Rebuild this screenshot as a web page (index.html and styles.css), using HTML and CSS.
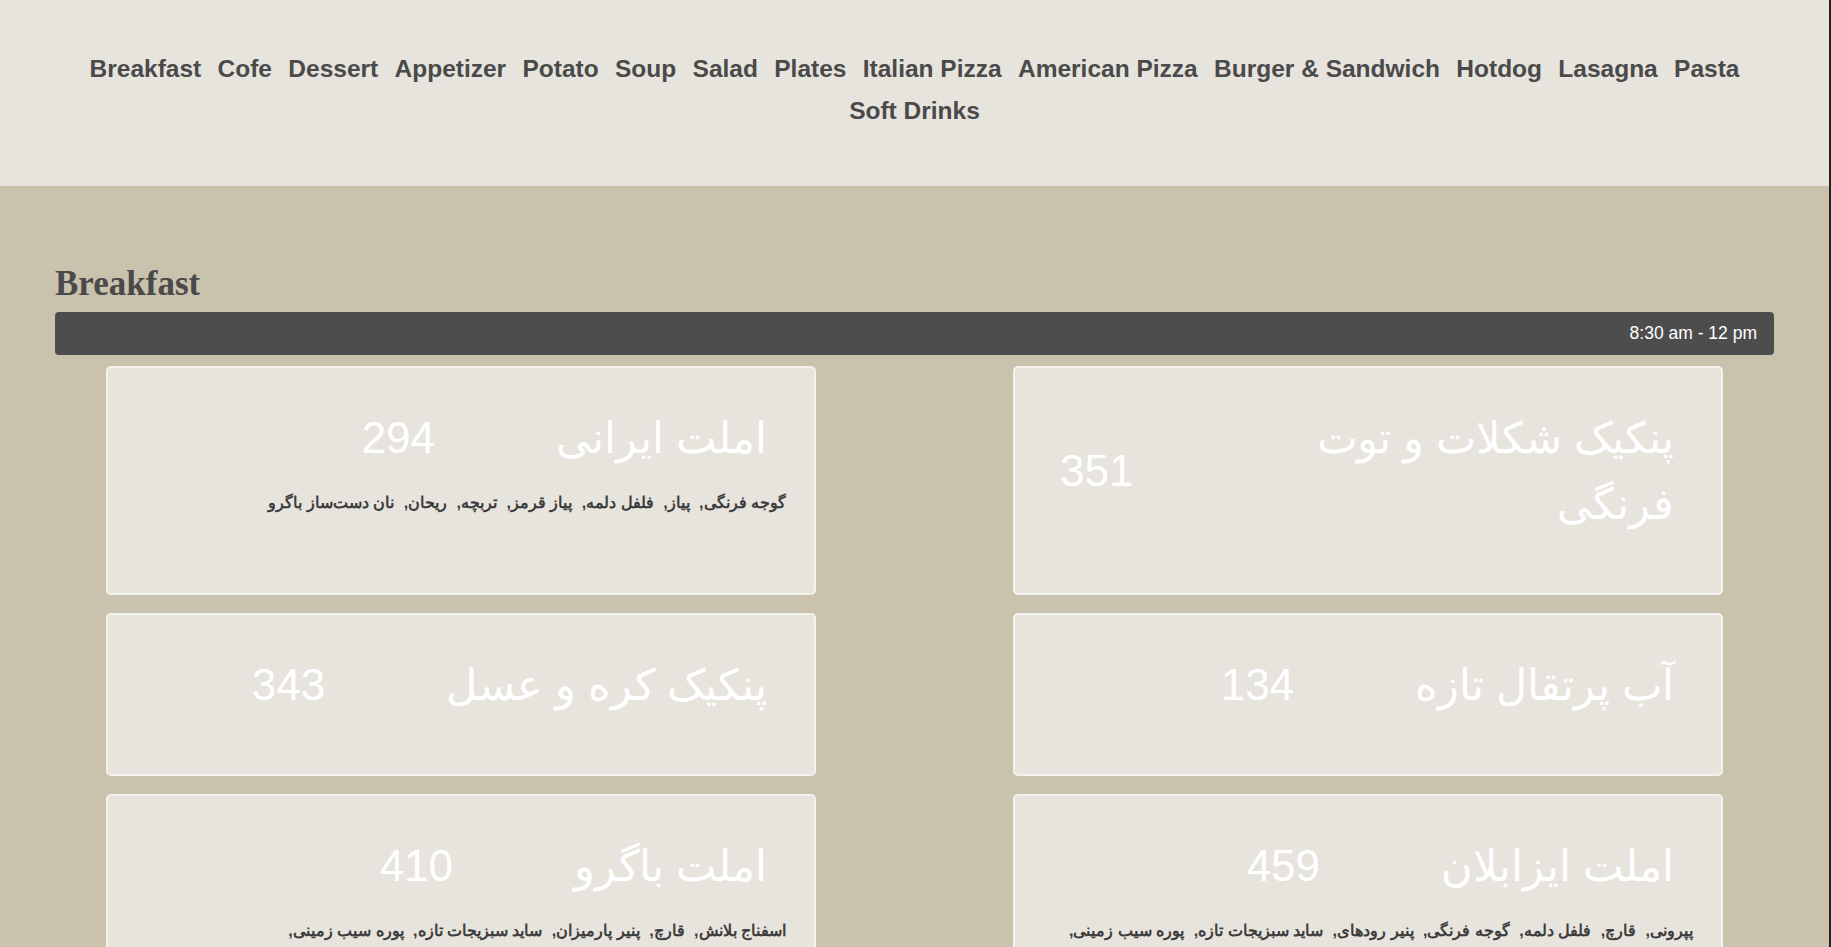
FILE: index.html
```html
<!DOCTYPE html>
<html lang="en">
<head>
<meta charset="utf-8">
<title>Menu</title>
<link rel="stylesheet" href="styles.css">
</head>
<body>
<header class="topbar">
  <nav class="menu">
    <a class="menu-link" href="#">Breakfast</a>
    <a class="menu-link" href="#">Cofe</a>
    <a class="menu-link" href="#">Dessert</a>
    <a class="menu-link" href="#">Appetizer</a>
    <a class="menu-link" href="#">Potato</a>
    <a class="menu-link" href="#">Soup</a>
    <a class="menu-link" href="#">Salad</a>
    <a class="menu-link" href="#">Plates</a>
    <a class="menu-link" href="#">Italian Pizza</a>
    <a class="menu-link" href="#">American Pizza</a>
    <a class="menu-link" href="#">Burger &amp; Sandwich</a>
    <a class="menu-link" href="#">Hotdog</a>
    <a class="menu-link" href="#">Lasagna</a>
    <a class="menu-link" href="#">Pasta</a>
    <a class="menu-link" href="#">Soft Drinks</a>
  </nav>
</header>
<main class="content">
  <section class="category">
    <h2 class="category-title">Breakfast</h2>
    <div class="hours-bar"><span class="hours">8:30 am - 12 pm</span></div>
    <div class="items">
      <article class="item" dir="rtl">
        <div class="item-head">
          <h3 class="item-name">املت ایرانی</h3>
          <span class="item-price">294</span>
        </div>
        <p class="item-ingredients"><span class="ingredient">گوجه فرنگی,</span> <span class="ingredient">پیاز,</span> <span class="ingredient">فلفل دلمه,</span> <span class="ingredient">پیاز قرمز,</span> <span class="ingredient">تربچه,</span> <span class="ingredient">ریحان,</span> <span class="ingredient">نان دست‌ساز باگرو</span></p>
      </article>
      <article class="item" dir="rtl">
        <div class="item-head">
          <h3 class="item-name">پنکیک شکلات و توت فرنگی</h3>
          <span class="item-price">351</span>
        </div>
      </article>
      <article class="item" dir="rtl">
        <div class="item-head">
          <h3 class="item-name">پنکیک کره و عسل</h3>
          <span class="item-price">343</span>
        </div>
      </article>
      <article class="item" dir="rtl">
        <div class="item-head">
          <h3 class="item-name">آب پرتقال تازه</h3>
          <span class="item-price">134</span>
        </div>
      </article>
      <article class="item" dir="rtl">
        <div class="item-head">
          <h3 class="item-name">املت باگرو</h3>
          <span class="item-price">410</span>
        </div>
        <p class="item-ingredients"><span class="ingredient">اسفناج بلانش,</span> <span class="ingredient">قارچ,</span> <span class="ingredient">پنیر پارمیزان,</span> <span class="ingredient">ساید سبزیجات تازه,</span> <span class="ingredient">پوره سیب زمینی,</span> <span class="ingredient">نان دست‌ساز باگرو با کره محلی</span></p>
      </article>
      <article class="item" dir="rtl">
        <div class="item-head">
          <h3 class="item-name">املت ایزابلان</h3>
          <span class="item-price">459</span>
        </div>
        <p class="item-ingredients"><span class="ingredient">پپرونی,</span> <span class="ingredient">قارچ,</span> <span class="ingredient">فلفل دلمه,</span> <span class="ingredient">گوجه فرنگی,</span> <span class="ingredient">پنیر رودهای,</span> <span class="ingredient">ساید سبزیجات تازه,</span> <span class="ingredient">پوره سیب زمینی,</span> <span class="ingredient">نان دست‌ساز باگرو</span></p>
      </article>
    </div>
  </section>
</main>
</body>
</html>
```

FILE: styles.css
```css
html {
  background: #222222;
}

body {
  margin: 0 2px 0 0;
  background: #c9c3ae;
  font-family: "Liberation Sans", Arial, sans-serif;
}

.topbar {
  background: #e7e4dd;
  padding: 48px 80px 54px;
}

.menu {
  text-align: center;
  font-size: 24.5px;
  line-height: 42px;
  font-weight: bold;
}

.menu-link {
  color: #4a4a4a;
  text-decoration: none;
  padding: 0 4.75px;
}

.content {
  padding: 78px 55px 40px;
}

.category-title {
  margin: 0 0 8px;
  font-family: "Liberation Serif", "Times New Roman", serif;
  font-size: 35px;
  line-height: 40px;
  font-weight: bold;
  color: #4a4a4a;
}

.hours-bar {
  height: 43px;
  display: flex;
  align-items: center;
  justify-content: flex-end;
  padding: 0 17px;
  background: #4d4d4d;
  border-radius: 4px;
  color: #ffffff;
  font-size: 17.5px;
}

.items {
  display: grid;
  grid-template-columns: 710px 710px;
  justify-content: space-between;
  row-gap: 18px;
  padding: 11px 51px 0;
}

.item {
  background: #e7e4dd;
  border: 2px solid #f4f2ee;
  border-radius: 5px;
  padding: 37px 28px 56px;
}

.item-head {
  display: flex;
  align-items: center;
  gap: 121px;
  padding: 0 19px 0 17px;
}

.item-name {
  margin: 0;
  font-size: 43px;
  line-height: 66px;
  font-weight: normal;
  color: #ffffff;
}

.item-price {
  flex: none;
  font-size: 44px;
  line-height: 66px;
  color: #ffffff;
}

.item-ingredients {
  margin: 17px 0 0;
  font-size: 16px;
  line-height: 30px;
  font-weight: bold;
  color: #3d3d3d;
}

.ingredient {
  margin-left: 5px;
  white-space: nowrap;
}
```
